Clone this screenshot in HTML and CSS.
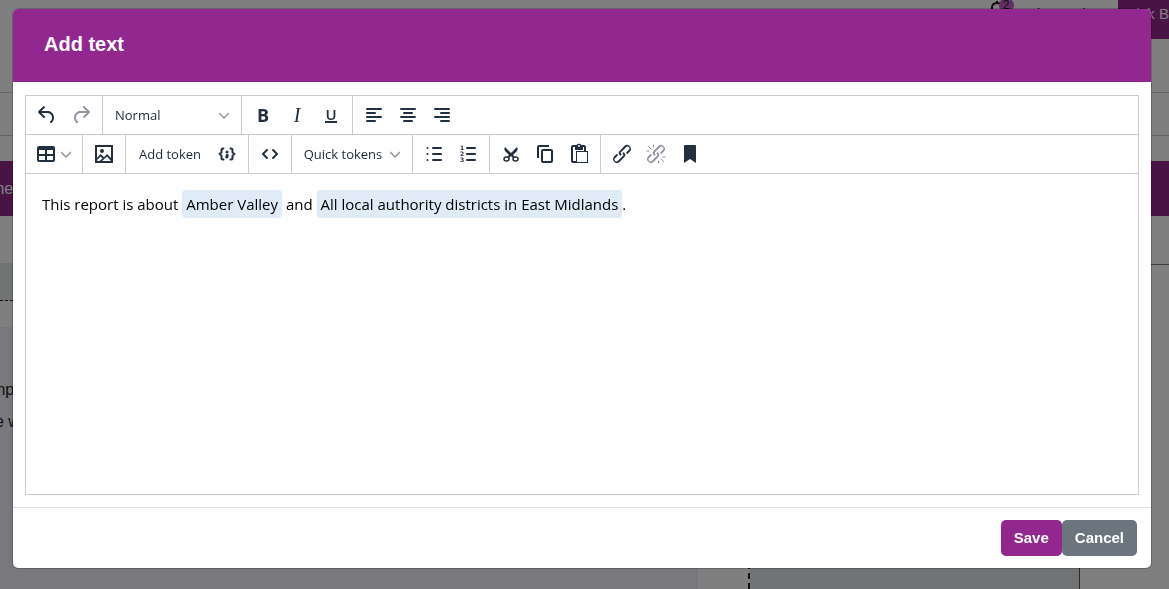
FILE: index.html
```html
<!DOCTYPE html>
<html lang="en">
<head>
  <meta charset="UTF-8">
  <meta name="viewport" content="width=device-width, initial-scale=1.0">
  <title>Add text</title>
  <link rel="stylesheet" href="styles.css">
</head>
<body>
  <div class="page">
    <header class="topbar">
      <a class="bell" href="#" aria-label="Notifications">
        <svg width="18" height="20" viewBox="0 0 18 20"><path d="M2 15c2-2 2-4 2-7 0-4 2-5 5-5s5 1 5 5c0 3 0 5 2 7zM9 3V1" fill="none" stroke="#111" stroke-width="2"/></svg>
        <span class="badge">2</span>
      </a>
      <a class="top-link" href="#">Help</a>
      <a class="top-link" href="#">About</a>
      <a class="user" href="#">Nick B</a>
    </header>
    <div class="strip strip-tall"></div>
    <div class="strip"></div>
    <div class="strip-gap"></div>
    <nav class="nav"><a href="#">me</a></nav>
    <div class="workspace">
      <div class="main-col">
        <div class="main-head"></div>
        <div class="main-text">
          <p>mp</p>
          <p>e w</p>
        </div>
      </div>
      <div class="mid-col"></div>
      <div class="side-col"></div>
    </div>
  </div>

  <div class="backdrop"></div>

  <div class="modal" role="dialog" aria-labelledby="title">
    <div class="modal-header">
      <h1 id="title">Add text</h1>
    </div>
    <div class="modal-body">
      <div class="editor">
        <div class="toolbar">
          <div class="group">
            <button class="tool" aria-label="Undo"><svg class="icon" viewBox="0 0 24 24"><path d="M6.4 8H12c3.7 0 6.2 2 6.8 5.1.6 2.7-.4 5.6-2.3 6.8a1 1 0 0 1-1-1.8c1.1-.6 1.8-2.7 1.4-4.6-.5-2.1-2.1-3.5-4.9-3.5H6.4l3.3 3.3a1 1 0 1 1-1.4 1.4l-5-5a1 1 0 0 1 0-1.4l5-5a1 1 0 0 1 1.4 1.4L6.4 8Z"/></svg></button>
            <button class="tool" aria-label="Redo" disabled><svg class="icon" viewBox="0 0 24 24"><path d="M17.6 10H12c-2.8 0-4.4 1.4-4.9 3.5-.4 2 .3 4 1.4 4.6a1 1 0 1 1-1 1.8c-2-1.2-2.9-4.1-2.3-6.8.6-3 3-5.1 6.8-5.1h5.6l-3.3-3.3a1 1 0 1 1 1.4-1.4l5 5a1 1 0 0 1 0 1.4l-5 5a1 1 0 0 1-1.4-1.4l3.3-3.3Z"/></svg></button>
          </div>
          <div class="group">
            <div class="format">
              <select aria-label="Format"><option>Normal</option><option>Heading</option></select>
              <svg class="chevron" viewBox="0 0 10 10"><path d="M0 3l5 5 5-5"/></svg>
            </div>
          </div>
          <div class="group">
            <button class="tool bold" aria-label="Bold">B</button>
            <button class="tool italic" aria-label="Italic">I</button>
            <button class="tool underline" aria-label="Underline"><span>U</span></button>
          </div>
          <div class="group">
            <button class="tool" aria-label="Align left"><svg class="icon line" viewBox="0 0 24 24"><path d="M5 6h14M5 10h8M5 14h14M5 18h8"/></svg></button>
            <button class="tool" aria-label="Align center"><svg class="icon line" viewBox="0 0 24 24"><path d="M5 6h14M8 10h8M5 14h14M8 18h8"/></svg></button>
            <button class="tool" aria-label="Align right"><svg class="icon line" viewBox="0 0 24 24"><path d="M5 6h14M11 10h8M5 14h14M11 18h8"/></svg></button>
          </div>
        </div>
        <div class="toolbar">
          <div class="group">
            <button class="tool tool-table" aria-label="Table"><svg class="icon" viewBox="0 0 24 24"><path fill-rule="evenodd" d="M5 4h14a2 2 0 0 1 2 2v12a2 2 0 0 1-2 2H5a2 2 0 0 1-2-2V6a2 2 0 0 1 2-2zM5 8v4h6V8zm8 0v4h6V8zm-8 6v4h6v-4zm8 0v4h6v-4z"/></svg><svg class="chevron" viewBox="0 0 10 10"><path d="M0 3l5 5 5-5"/></svg></button>
          </div>
          <div class="group">
            <button class="tool" aria-label="Image"><svg class="icon" viewBox="0 0 24 24"><path fill-rule="evenodd" d="M3 3h18v18H3zM5 5v10.700l3.500-3.700 3.500 3.300 3-3.300 4 4V5zM5 19h2.500l3-2.500-2-2L5 18zm5 0h9l-4-4.500z"/><circle cx="10" cy="9" r="2"/></svg></button>
          </div>
          <div class="group">
            <button class="tool tool-text">Add token</button>
            <button class="tool" aria-label="Token"><svg class="icon braces" viewBox="0 0 24 24"><path d="M8.500 6.500H8Q6.500 6.500 6.500 8v2.500L4.500 12l2 1.500V16q0 1.500 1.500 1.500h.5M15.500 6.500h.5q1.500 0 1.500 1.500v2.500l2 1.500-2 1.500V16q0 1.500-1.500 1.500h-.5"/><path class="dots" d="M12 10v.1M12.200 13.500l-.4 1.500"/></svg></button>
          </div>
          <div class="group">
            <button class="tool" aria-label="Source code"><svg class="icon line" viewBox="0 0 24 24"><path d="M9 8l-4 4 4 4M15 8l4 4-4 4"/></svg></button>
          </div>
          <div class="group">
            <button class="tool tool-quick">Quick tokens<svg class="chevron" viewBox="0 0 10 10"><path d="M0 3l5 5 5-5"/></svg></button>
          </div>
          <div class="group">
            <button class="tool" aria-label="Bullet list"><svg class="icon line" viewBox="0 0 24 24"><path d="M11 6h8M11 12h8M11 18h8M5.500 6v.1M5.500 12v.1M5.500 18v.1"/></svg></button>
            <button class="tool" aria-label="Numbered list"><svg class="icon line" viewBox="0 0 24 24"><path d="M11 6h8M11 12h8M11 18h8"/><text x="4" y="8">1</text><text x="4" y="14">2</text><text x="4" y="20">3</text></svg></button>
          </div>
          <div class="group">
            <button class="tool" aria-label="Cut"><svg class="icon scissors" viewBox="0 0 24 24"><path d="M6 5l6 6 6-6 .5 1a3.300 3.300 0 0 1-.5 3l-4 4 2 2-1.500 1.500L12 14l-2.500 2.500L8 15l2-2-4-4a3.300 3.300 0 0 1-.5-3z"/><ellipse cx="7.500" cy="17" rx="2.500" ry="2"/><ellipse cx="16.500" cy="17" rx="2.500" ry="2"/></svg></button>
            <button class="tool" aria-label="Copy"><svg class="icon" viewBox="0 0 24 24"><path fill-rule="evenodd" d="M16 3H6a2 2 0 0 0-2 2v11h2V5h10zM10 7h8a2 2 0 0 1 2 2v10a2 2 0 0 1-2 2h-8a2 2 0 0 1-2-2V9a2 2 0 0 1 2-2zm0 2v10h8V9z"/></svg></button>
            <button class="tool" aria-label="Paste"><svg class="icon" viewBox="0 0 24 24"><path fill-rule="evenodd" d="M19 9V5a2 2 0 0 0-2-2h-2.500a3 3 0 0 0-5 0H6a2 2 0 0 0-2 2v14a2 2 0 0 0 2 2h15V9zM12 3a1 1 0 1 1 0 2 1 1 0 0 1 0-2zM6 5h2v3h8V5h1v4H9v10H6zm4 5h10v10H10z"/></svg></button>
          </div>
          <div class="group">
            <button class="tool" aria-label="Link"><svg class="icon" viewBox="0 0 24 24"><path d="M6.200 12.300a1 1 0 0 1 1.400 1.400l-2 2a2 2 0 1 0 2.600 2.800l4.800-4.800a1 1 0 0 0 0-1.400 1 1 0 1 1 1.400-1.300 2.900 2.900 0 0 1 0 4L9.600 20a3.900 3.900 0 0 1-5.500-5.500l2-2Zm11.600-.6a1 1 0 0 1-1.400-1.400l2-2a2 2 0 1 0-2.600-2.800L11 10.300a1 1 0 0 0 0 1.400A1 1 0 1 1 9.600 13a2.900 2.900 0 0 1 0-4L14.400 4a3.900 3.900 0 0 1 5.500 5.500l-2 2Z"/></svg></button>
            <button class="tool" aria-label="Remove link" disabled><svg class="icon" viewBox="0 0 24 24"><path d="M6.200 12.300a1 1 0 0 1 1.400 1.400l-2 2a2 2 0 1 0 2.600 2.800l4.800-4.800a1 1 0 0 0 0-1.400 1 1 0 1 1 1.400-1.300 2.900 2.900 0 0 1 0 4L9.600 20a3.900 3.900 0 0 1-5.500-5.500l2-2Zm11.600-.6a1 1 0 0 1-1.400-1.400l2-2a2 2 0 1 0-2.600-2.800L11 10.300a1 1 0 0 0 0 1.400A1 1 0 1 1 9.600 13a2.900 2.900 0 0 1 0-4L14.400 4a3.900 3.900 0 0 1 5.500 5.500l-2 2Z"/><path class="ticks" d="M4 4l3.500 3.500M9.500 2.500v3M2.500 9h3M16.500 16.500L20 20M14.500 18.500v3M18.500 15h3"/></svg></button>
            <button class="tool" aria-label="Bookmark"><svg class="icon" viewBox="0 0 24 24"><path d="M6 4q0-1 1-1h10q1 0 1 1v17l-6-4-6 4z"/></svg></button>
          </div>
        </div>
        <div class="content" contenteditable="true">
          <p>This report is about <span class="token">Amber Valley</span> and <span class="token">All local authority districts in East Midlands</span>.</p>
        </div>
      </div>
    </div>
    <div class="modal-footer">
      <button class="btn btn-save">Save</button>
      <button class="btn btn-cancel">Cancel</button>
    </div>
  </div>
</body>
</html>
```
FILE: styles.css
```css
* {
  box-sizing: border-box;
}
body {
  margin: 0;
  height: 100vh;
  overflow: hidden;
  background: #fff;
  font-family: "Liberation Sans", Arial, sans-serif;
  font-size: 16px;
}
a {
  color: inherit;
  text-decoration: none;
}
button,
select {
  font-family: inherit;
  cursor: pointer;
}

/* page behind the dialog */
.page {
  display: flex;
  flex-direction: column;
  height: 100vh;
  color: #222;
}
.topbar {
  display: flex;
  justify-content: flex-end;
  height: 39px;
  font-size: 15px;
  line-height: 27px;
}
.bell {
  display: flex;
  margin-right: 4px;
}
.badge {
  width: 15px;
  height: 15px;
  margin-left: -7px;
  margin-top: -2px;
  border-radius: 50%;
  background: #c95fc6;
  font-size: 12px;
  line-height: 15px;
  text-align: center;
}
.top-link {
  margin-right: 24px;
}
.top-link + .top-link {
  margin-right: 6px;
}
.user {
  padding: 0 0 0 8px;
  background: #92278f;
  color: #fff;
  white-space: nowrap;
}
.strip {
  height: 43px;
  border-bottom: 1px solid #ccc;
}
.strip-tall {
  height: 54px;
}
.strip-gap {
  height: 25px;
}
.nav {
  height: 55px;
  background: #92278f;
  color: #fff;
  line-height: 55px;
  text-indent: -9px;
}
.workspace {
  display: flex;
  flex: 1;
  padding-top: 47px;
}
.main-col {
  display: flex;
  flex-direction: column;
  width: 64.2%;
  border-right: 2px dashed #222;
}
.main-head {
  height: 38px;
  background: #e2e6e8;
  border-bottom: 1px dashed #222;
}
.main-text {
  flex: 1;
  margin: 26px 50px 0 0;
  padding-top: 47px;
  background: #f1eff9;
  line-height: 32px;
  text-indent: -8px;
}
.main-text p {
  margin: 0;
}
.main-text p + p {
  text-indent: -5px;
}
.mid-col {
  width: 28.2%;
  background: #e2e6e8;
  border-right: 1px solid #555;
}
.side-col {
  flex: 1;
  margin-top: 1px;
  border-top: 1px solid #717880;
}
.backdrop {
  position: fixed;
  inset: 0;
  background: rgba(0, 0, 0, 0.5);
}

/* dialog */
.modal {
  position: fixed;
  top: 8px;
  left: 12px;
  right: 17px;
  background: #fff;
  background-clip: padding-box;
  border: 1px solid rgba(0, 0, 0, 0.2);
  border-radius: 6px;
}
.modal-header {
  padding: 19px 31px 22px;
  background: #92278f;
  border-radius: 5px 5px 0 0;
}
.modal-header h1 {
  margin: 0;
  color: #fff;
  font-size: 20px;
  line-height: 32px;
}
.modal-body {
  padding: 13px 12px 12px;
}
.editor {
  display: flex;
  flex-direction: column;
  min-height: 400px;
  border: 1px solid #ccc;
  color: #222f3e;
  font-family: "Open Sans", sans-serif;
}
.toolbar {
  display: flex;
  flex-wrap: wrap;
  border-bottom: 1px solid #ccc;
}
.group {
  display: flex;
  align-items: center;
  height: 38px;
  box-sizing: content-box;
  padding: 0 4px;
  border-right: 1px solid #ccc;
}
.group:last-child {
  border-right: 0;
}
.tool {
  display: flex;
  align-items: center;
  justify-content: center;
  width: 34px;
  height: 34px;
  padding: 0;
  border: 0;
  border-radius: 3px;
  background: none;
  color: inherit;
  font-size: 13px;
}
.tool:hover,
.format:hover {
  background: #dee0e2;
}
.tool:disabled {
  background: none;
  color: #9095a0;
}
.icon {
  flex: none;
  width: 24px;
  height: 24px;
  fill: currentColor;
}
.line,
.braces {
  fill: none;
  stroke: currentColor;
  stroke-width: 2;
  stroke-linecap: round;
  stroke-linejoin: round;
}
.line text {
  fill: currentColor;
  stroke: none;
  font: bold 6px "DejaVu Sans", sans-serif;
}
.dots {
  stroke-width: 3;
}
.scissors ellipse {
  fill: #fff;
  stroke: currentColor;
  stroke-width: 1.5;
}
.ticks {
  fill: none;
  stroke: currentColor;
}
.chevron {
  flex: none;
  width: 10px;
  height: 10px;
  fill: none;
  stroke: #8f969e;
  stroke-width: 1.5;
}
.format {
  display: flex;
  align-items: center;
  width: 130px;
  height: 34px;
}
.format select {
  flex: 1;
  height: 34px;
  margin-right: -10px;
  padding: 0 8px;
  border: 0;
  background: none;
  color: inherit;
  font-size: 13px;
  appearance: none;
}
.format .chevron {
  margin-right: 8px;
  pointer-events: none;
}
.bold {
  font-size: 18px;
  font-weight: bold;
}
.italic {
  font: italic 20px "Liberation Serif", serif;
}
.underline {
  font-size: 15px;
  font-weight: 600;
}
.underline span {
  border-bottom: 2px solid;
  line-height: 14px;
}
.tool-table {
  width: 48px;
  padding-right: 4px;
  gap: 3px;
}
.tool-text {
  width: 80px;
}
.tool-quick {
  width: 112px;
  gap: 8px;
}
.content {
  flex: 1;
  padding: 16px;
  color: #000;
  font-size: 15px;
  line-height: 28px;
  outline: none;
}
.content p {
  margin: 0;
}
.token {
  display: inline-block;
  padding: 0 4px;
  border-radius: 4px;
  background: #e0ebf8;
}
.modal-footer {
  display: flex;
  justify-content: flex-end;
  padding: 12px 14px;
  border-top: 1px solid #dee2e6;
}
.btn {
  height: 36px;
  padding: 0 13px 2px;
  border: 0;
  border-radius: 5px;
  color: #fff;
  font-size: 15px;
  font-weight: bold;
}
.btn-save {
  background: #92278f;
}
.btn-cancel {
  background: #6c757d;
}
```
